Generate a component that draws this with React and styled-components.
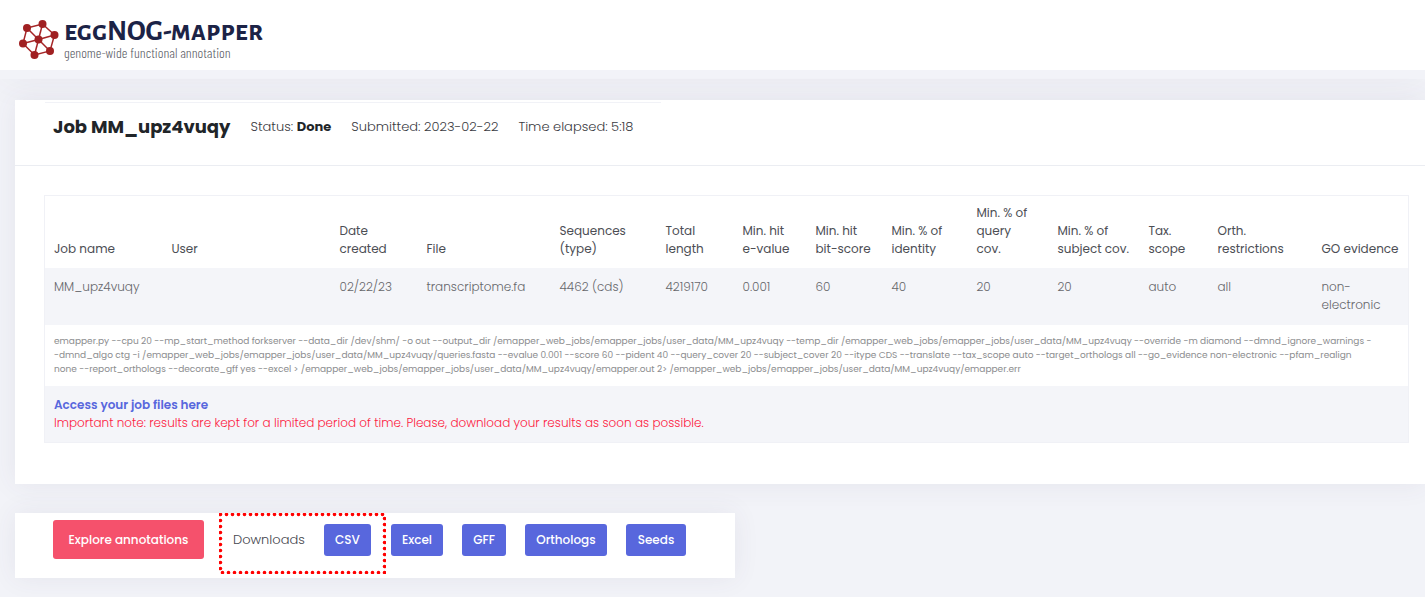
import React from "react";
import styled, { createGlobalStyle } from "styled-components";

const GlobalStyle = createGlobalStyle`
  * { box-sizing: border-box; }
  body {
    margin: 0;
    background: #f2f3f8;
    color: #46474f;
    font-family: Poppins, Inter, "Open Sans", sans-serif;
    font-size: 13px;
    font-weight: 300;
    overflow-x: hidden;
  }
`;

const Page = styled.div`
  min-height: 100vh;
  padding-bottom: 19px;
`;

const Header = styled.header`
  height: 79px;
  background: #f2f3f8;
  border-top: 70px solid #fff;
  box-shadow: 0 0 40px rgba(82, 63, 105, 0.06);
`;

const Brand = styled.a`
  display: flex;
  gap: 4px;
  width: max-content;
  margin-top: -52px;
  padding-left: 18px;
  text-decoration: none;
`;

const BrandText = styled.span`
  display: flex;
  flex-direction: column;
`;

const BrandName = styled.span`
  font-family: "Alegreya Sans", Lato, sans-serif;
  font-size: 29px;
  font-variant: small-caps;
  font-weight: 700;
  line-height: 27px;
  color: #1c2346;
  white-space: nowrap;
`;

const Tagline = styled.span`
  font-family: "Barlow Condensed", "Roboto Condensed", Roboto, sans-serif;
  font-size: 14px;
  line-height: 16px;
  color: #5b5d66;
  white-space: nowrap;
`;

const Card = styled.section`
  background: #fff;
  box-shadow: 0 0 26px rgba(82, 63, 105, 0.08);
`;

const JobCard = styled(Card)`
  margin: 21px 0 0 15px;
  padding-bottom: 41px;
`;

const JobHeader = styled.div`
  height: 66px;
  padding: 2px 30px 0;
  border-bottom: 1px solid #ebedf2;
`;

const JobSummary = styled.div`
  display: flex;
  align-items: center;
  gap: 20px;
  width: 616px;
  height: 48px;
  padding-left: 8px;
  border-top: 1px solid #f1f2f7;
  color: #3a3b42;
  white-space: nowrap;
`;

const JobTitle = styled.h1`
  margin: 0;
  font-size: 18px;
  font-weight: 700;
  line-height: 26px;
  color: #212529;
`;

const Strong = styled.b`
  font-weight: 700;
  color: #212529;
`;

const JobBody = styled.div`
  padding: 29px 18px 0 29px;
`;

const Table = styled.table`
  width: 100%;
  table-layout: fixed;
  border-collapse: collapse;
  border: 1px solid #f0f1f6;
  line-height: 18px;
`;

const Col = styled.col`
  width: ${(p) => p.$w}px;
`;

const Row = styled.tr`
  background: ${(p) => (p.$shaded ? "#f4f5f9" : "#fff")};
`;

const HeadCell = styled.th`
  padding: 8px 0 10px 9px;
  font-size: 12px;
  font-weight: 400;
  text-align: left;
  vertical-align: bottom;
  white-space: pre;
  color: #4c4e54;
`;

const Cell = styled.td`
  padding: 10px 0 11px 9px;
  font-size: 12px;
  vertical-align: top;
  white-space: pre;
  color: #66676b;
`;

const CommandCell = styled.td`
  padding: 9px 0 10px 9px;
  font-size: 9px;
  font-weight: 400;
  line-height: 14px;
  white-space: pre;
  color: #8b8c8e;
`;

const FilesCell = styled.td`
  padding: 10px 9px;
  font-size: 12px;
`;

const FilesLink = styled.a`
  font-weight: 600;
  color: #5867dd;
  text-decoration: none;
`;

const Note = styled.div`
  color: #fd1a3f;
`;

const ActionCard = styled(Card)`
  display: flex;
  align-items: flex-start;
  width: 720px;
  max-width: calc(100% - 15px);
  height: 65px;
  margin: 29px 0 0 15px;
  padding-left: 38px;
`;

const ExploreButton = styled.button`
  width: 151px;
  height: 39px;
  margin: 7px 15px 0 0;
  padding: 0;
  border: 0;
  border-radius: 3px;
  background: #f5516c;
  color: #fff;
  font: 500 12px Poppins, Inter, sans-serif;
`;

const Highlight = styled.div`
  position: relative;
  display: flex;
  justify-content: space-between;
  align-items: flex-start;
  width: 167px;
  height: 61px;
  padding: 11px 15px 0 14px;
  font-size: 13px;
  line-height: 32px;
`;

const DottedFrame = styled.svg`
  position: absolute;
  inset: 0;
  pointer-events: none;
`;

const DownloadList = styled.div`
  display: flex;
  gap: 19px;
  margin: 11px 0 0 5px;
`;

const DownloadButton = styled.button`
  width: ${(p) => p.$w}px;
  height: 32px;
  padding: 0;
  border: 0;
  border-radius: 3px;
  background: #5867dd;
  color: #fff;
  font: 500 12px Poppins, Inter, sans-serif;
`;

const columns = [
  ["Job name", 118, "MM_upz4vuqy"],
  ["User", 168, ""],
  ["Date\ncreated", 87, "02/22/23"],
  ["File", 133, "transcriptome.fa"],
  ["Sequences\n(type)", 106, "4462 (cds)"],
  ["Total\nlength", 77, "4219170"],
  ["Min. hit\ne-value", 73, "0.001"],
  ["Min. hit\nbit-score", 76, "60"],
  ["Min. % of\nidentity", 85, "40"],
  ["Min. % of\nquery\ncov.", 81, "20"],
  ["Min. % of\nsubject cov.", 91, "20"],
  ["Tax.\nscope", 69, "auto"],
  ["Orth.\nrestrictions", 104, "all"],
  ["GO evidence", 96, "non-\nelectronic"],
];

const command = [
  "emapper.py --cpu 20 --mp_start_method forkserver --data_dir /dev/shm/ -o out --output_dir /emapper_web_jobs/emapper_jobs/user_data/MM_upz4vuqy --temp_dir /emapper_web_jobs/emapper_jobs/user_data/MM_upz4vuqy --override -m diamond --dmnd_ignore_warnings -",
  "-dmnd_algo ctg -i /emapper_web_jobs/emapper_jobs/user_data/MM_upz4vuqy/queries.fasta --evalue 0.001 --score 60 --pident 40 --query_cover 20 --subject_cover 20 --itype CDS --translate --tax_scope auto --target_orthologs all --go_evidence non-electronic --pfam_realign",
  "none --report_orthologs --decorate_gff yes --excel > /emapper_web_jobs/emapper_jobs/user_data/MM_upz4vuqy/emapper.out 2> /emapper_web_jobs/emapper_jobs/user_data/MM_upz4vuqy/emapper.err",
].join("\n");

const downloads = [
  ["Excel", 52],
  ["GFF", 44],
  ["Orthologs", 82],
  ["Seeds", 60],
];

const nodes = [[9, 10], [24.5, 6], [36.5, 17], [32, 33], [16.5, 37], [5, 25.5]];

function Logo() {
  return (
    <svg width="42" height="42" viewBox="0 0 42 42" aria-hidden="true">
      <g stroke="#a52527" strokeWidth="1.5" fill="none">
        <polygon points={nodes.map((n) => n.join(",")).join(" ")} />
        {nodes.map(([x, y]) => (
          <line key={x} x1="20.5" y1="21.5" x2={x} y2={y} />
        ))}
      </g>
      <g fill="#a02022">
        <circle cx="20.5" cy="21.5" r="4" />
        {nodes.map(([x, y]) => (
          <circle key={x} cx={x} cy={y} r="4" />
        ))}
      </g>
    </svg>
  );
}

export default function App() {
  return (
    <Page>
      <GlobalStyle />
      <Header>
        <Brand href="#">
          <Logo />
          <BrandText>
            <BrandName>eggNOG-mapper</BrandName>
            <Tagline>genome-wide functional annotation</Tagline>
          </BrandText>
        </Brand>
      </Header>
      <main>
        <JobCard>
          <JobHeader>
            <JobSummary>
              <JobTitle>Job MM_upz4vuqy</JobTitle>
              <span>Status: <Strong>Done</Strong></span>
              <span>Submitted: 2023-02-22</span>
              <span>Time elapsed: 5:18</span>
            </JobSummary>
          </JobHeader>
          <JobBody>
            <Table>
              <colgroup>
                {columns.map(([name, w]) => <Col key={name} $w={w} />)}
              </colgroup>
              <thead>
                <Row>
                  {columns.map(([name]) => <HeadCell key={name} scope="col">{name}</HeadCell>)}
                </Row>
              </thead>
              <tbody>
                <Row $shaded>
                  {columns.map(([name, , value]) => <Cell key={name}>{value}</Cell>)}
                </Row>
                <Row>
                  <CommandCell colSpan={columns.length}>{command}</CommandCell>
                </Row>
                <Row $shaded>
                  <FilesCell colSpan={columns.length}>
                    <FilesLink href="#">Access your job files here</FilesLink>
                    <Note>
                      Important note: results are kept for a limited period of time. Please, download your results as soon as possible.
                    </Note>
                  </FilesCell>
                </Row>
              </tbody>
            </Table>
          </JobBody>
        </JobCard>
        <ActionCard>
          <ExploreButton type="button">Explore annotations</ExploreButton>
          <Highlight>
            Downloads
            <DownloadButton type="button" $w={47}>CSV</DownloadButton>
            <DottedFrame width="167" height="61" aria-hidden="true">
              <rect
                x="1.5" y="1.5" width="164" height="58"
                fill="none" stroke="#f00" strokeWidth="3.6"
                strokeLinecap="round" strokeDasharray="0 6"
              />
            </DottedFrame>
          </Highlight>
          <DownloadList>
            {downloads.map(([label, w]) => (
              <DownloadButton key={label} type="button" $w={w}>{label}</DownloadButton>
            ))}
          </DownloadList>
        </ActionCard>
      </main>
    </Page>
  );
}
